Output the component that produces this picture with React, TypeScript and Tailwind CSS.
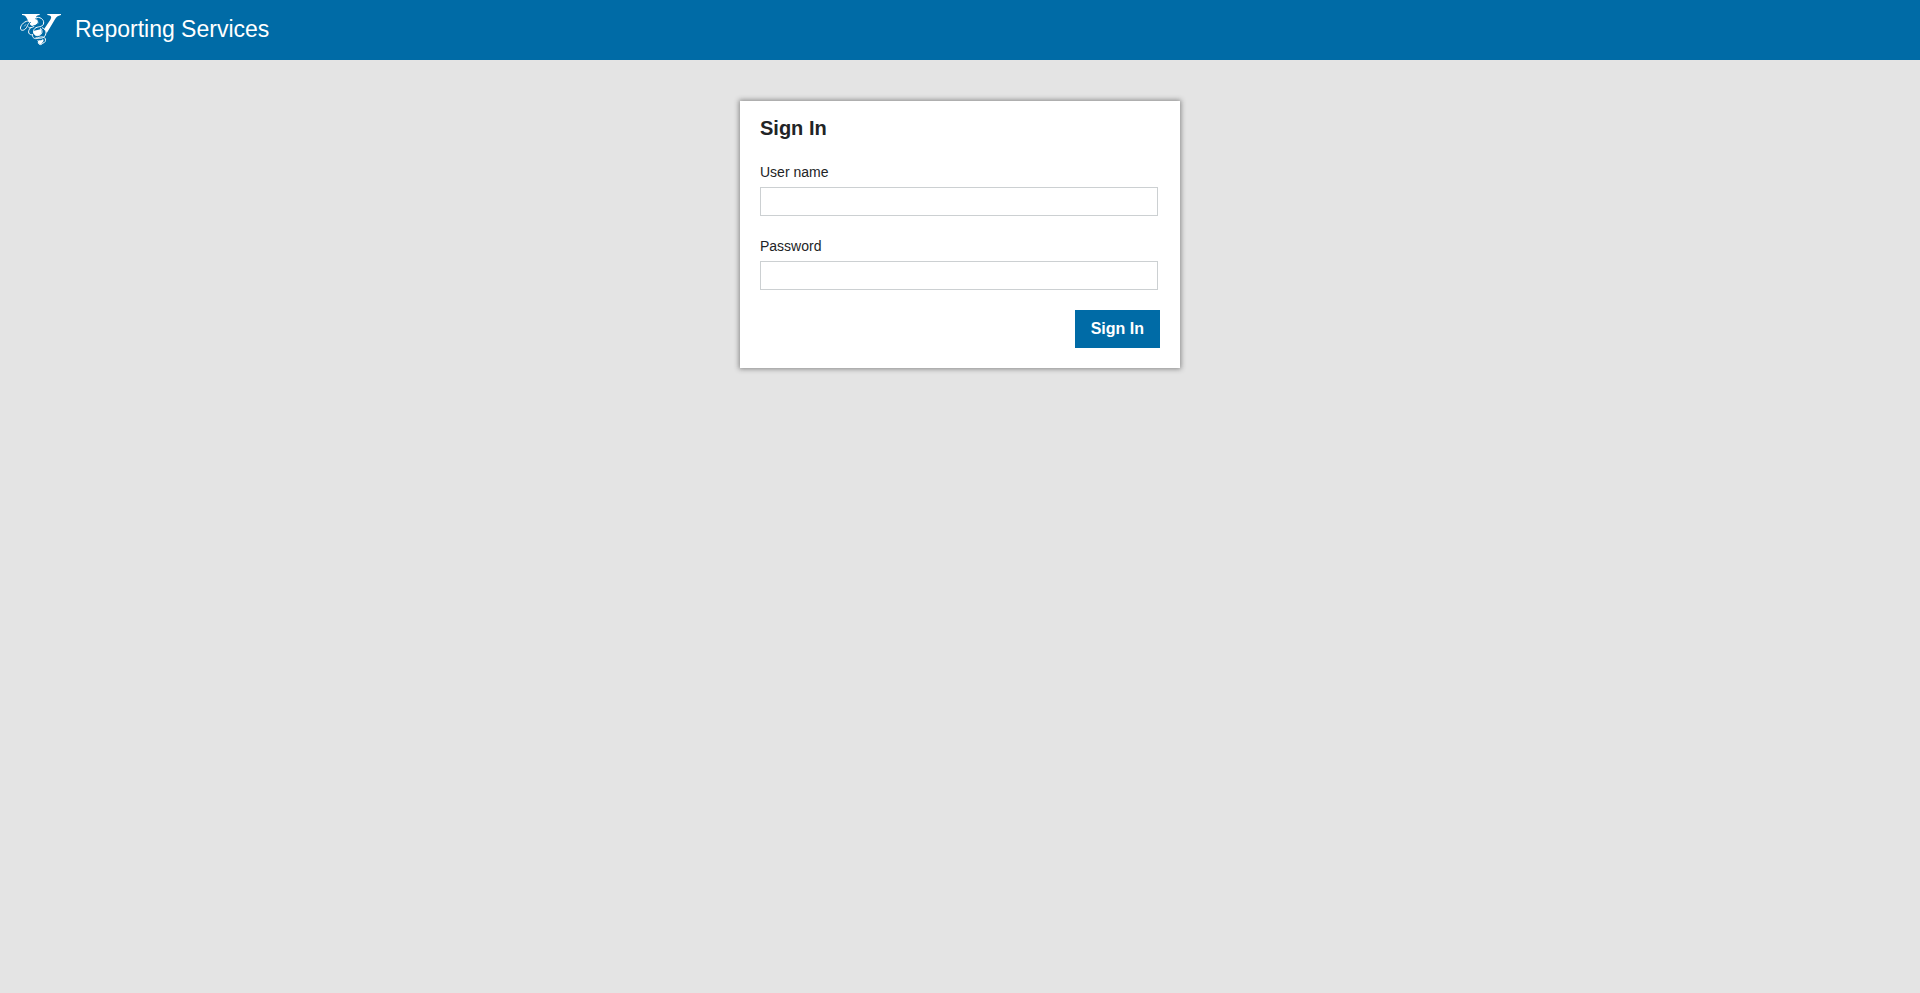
import React, { useState } from 'react';

const Logo: React.FC = () => (
  <svg className="h-[33px] w-[41px]" viewBox="60 40 123 99" fill="none" aria-hidden="true">
    <path
      d="M66 43H119V46C111 47 107 50 108 54C112 60 117 63 116 69C113 76 103 76 96 80L91 75L80 55C77 49 74 46 66 46Z"
      fill="white"
    />
    <path d="M142 43H183V46C173 48 169 52 165 59L140 101C139 95 136 91 132 89L151 60C156 52 154 47 142 46Z" fill="white" />
    <path d="M99 97C103 90 113 93 122 88C128 98 122 108 112 108C106 108 101 104 99 97Z" fill="white" />
    <path d="M111 121C117 125 124 123 129 118C134 124 127 128 124 133C119 135 116 132 115 127Z" fill="white" />
    <path
      d="M91 66C82 59 65 71 62 82C59 92 68 95 76 88C83 82 82 73 91 66Z"
      stroke="white"
      strokeWidth="3"
    />
    <path d="M73 80L78 74" stroke="white" strokeWidth="2" />
    <path
      d="M92 67C87 72 85 76 90 79C99 83 112 76 115 68C117 61 110 58 106 57"
      stroke="#006ba6"
      strokeWidth="3"
    />
    <path
      d="M105 54C120 50 132 59 131 70C130 82 117 80 108 84C98 89 99 101 106 106C114 111 126 106 126 96C126 90 123 87 120 85"
      stroke="white"
      strokeWidth="3"
    />
    <path
      d="M85 82C89 87 97 83 103 80M92 84C80 96 87 108 99 105M126 84C138 88 141 101 134 110C127 118 116 116 107 114"
      stroke="white"
      strokeWidth="3"
    />
    <path
      d="M98 105C96 114 104 119 112 116C120 110 132 110 136 117C138 124 134 130 129 130C125 136 117 137 115 130C113 125 119 121 123 125"
      stroke="white"
      strokeWidth="3"
    />
  </svg>
);

interface FieldProps {
  id: string;
  label: string;
  type: string;
  value: string;
  onChange: (value: string) => void;
}

const Field: React.FC<FieldProps> = ({ id, label, type, value, onChange }) => (
  <div className="mb-5 flex flex-col gap-[5px]">
    <label htmlFor={id} className="text-sm">
      {label}
    </label>
    <input
      id={id}
      name={id}
      type={type}
      value={value}
      onChange={(e) => onChange(e.target.value)}
      className="mr-0.5 h-[29px] border border-[#ccd0d2] bg-white px-2 text-sm outline-none focus:border-[#006ba6]"
    />
  </div>
);

const App: React.FC = () => {
  const [userName, setUserName] = useState('');
  const [password, setPassword] = useState('');

  const handleSubmit = (e: React.FormEvent) => {
    e.preventDefault();
  };

  return (
    <div className="min-h-screen bg-[#e4e4e4] font-['Liberation_Sans',Arial,sans-serif] text-[#222426]">
      <header className="flex h-15 items-center gap-3.5 bg-[#006ba6] px-5 pb-0.5">
        <Logo />
        <span className="text-[23px] leading-7 text-white">Reporting Services</span>
      </header>

      <main className="px-5 pt-[41px]">
        <form
          onSubmit={handleSubmit}
          className="mx-auto w-full max-w-[440px] bg-white px-5 pt-[13px] pb-5 shadow-[0_0_5px_1px_#888888]"
        >
          <h1 className="mb-5 text-xl font-bold">Sign In</h1>
          <Field id="username" label="User name" type="text" value={userName} onChange={setUserName} />
          <Field id="password" label="Password" type="password" value={password} onChange={setPassword} />
          <div className="flex justify-end">
            <button type="submit" className="h-[38px] cursor-pointer bg-[#006ba6] px-4 text-base font-bold text-white">
              Sign In
            </button>
          </div>
        </form>
      </main>
    </div>
  );
};

export default App;
